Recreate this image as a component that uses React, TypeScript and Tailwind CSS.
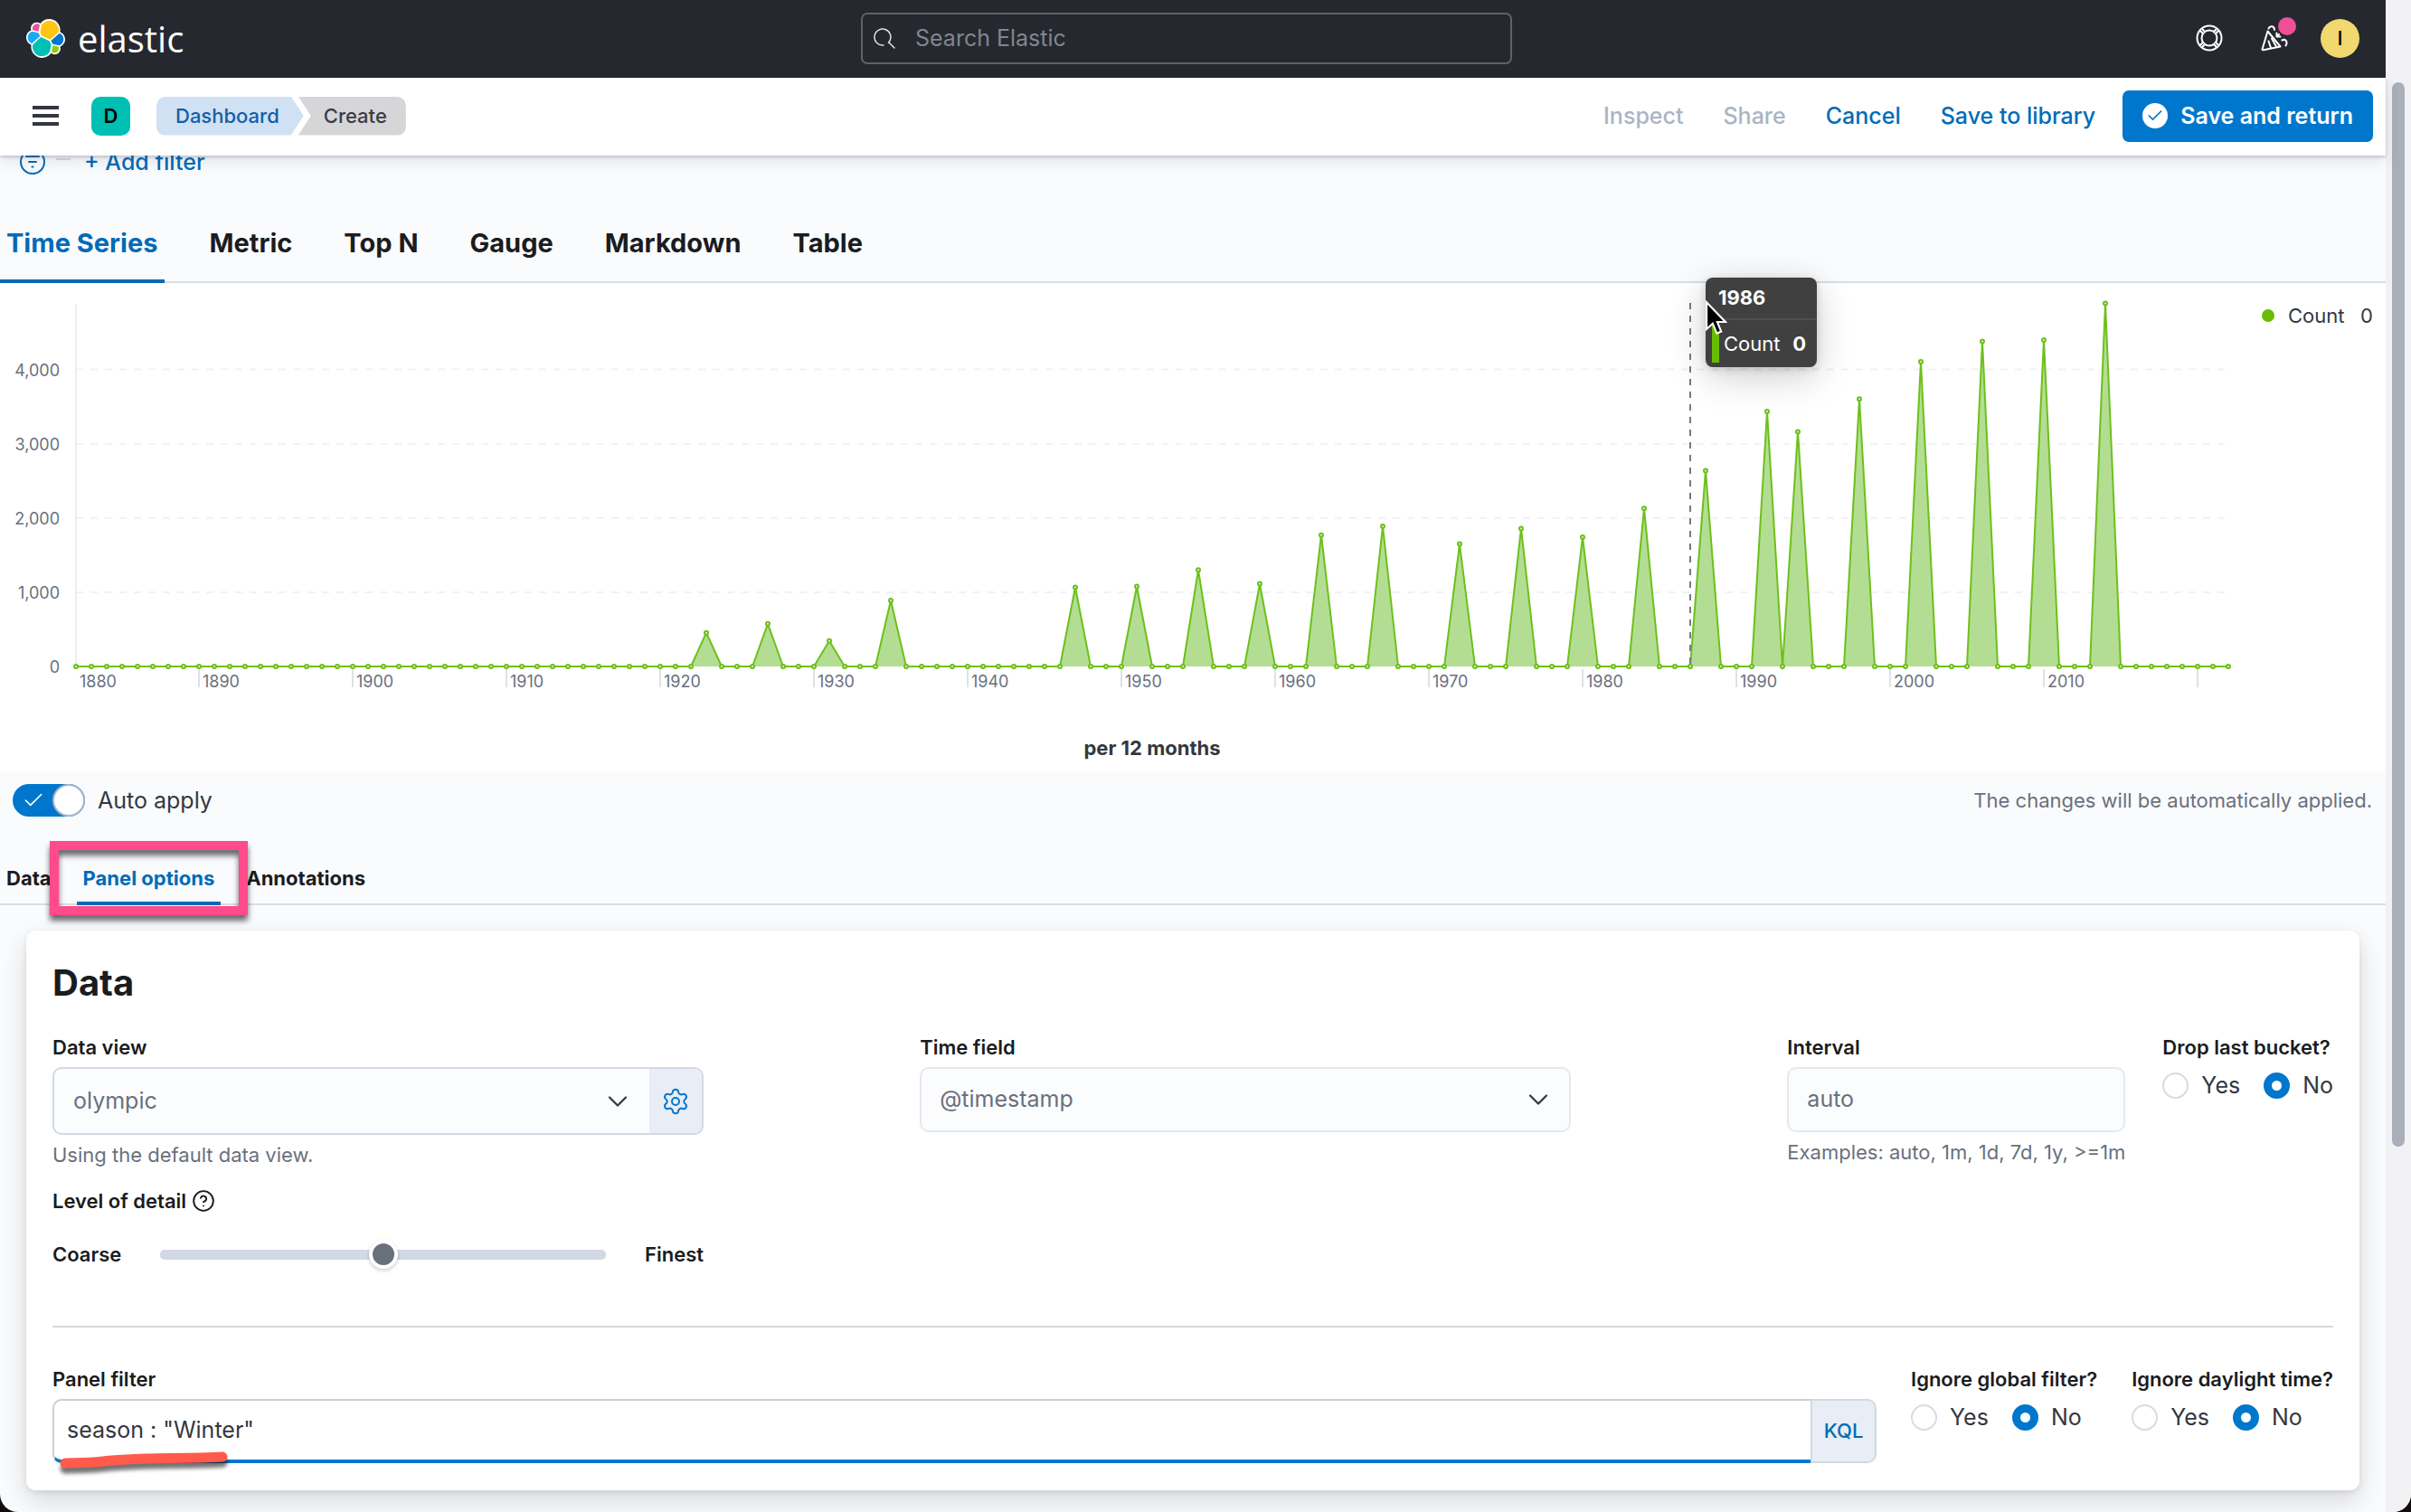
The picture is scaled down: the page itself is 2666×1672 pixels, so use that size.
import { useLayoutEffect, useRef, useState } from "react";
import type { ReactNode } from "react";
import { Check, ChevronDown, CircleQuestionMark, Settings } from "lucide-react";

const POINTS = 141;
const HOVERED = 105;

// bucket index -> document count, every other bucket is empty
const COUNTS: Record<number, number> = {
  41: 455, 45: 575, 49: 345, 53: 890, 65: 1066, 69: 1078, 73: 1300, 77: 1113,
  81: 1770, 85: 1888, 90: 1649, 94: 1858, 98: 1741, 102: 2127, 106: 2636, 110: 3434,
  112: 3160, 116: 3602, 120: 4104, 124: 4378, 128: 4398, 132: 4889,
};

const TICKS = [
  { index: 0, label: "1880" },
  { index: 8, label: "1890" },
  { index: 18, label: "1900" },
  { index: 28, label: "1910" },
  { index: 38, label: "1920" },
  { index: 48, label: "1930" },
  { index: 58, label: "1940" },
  { index: 68, label: "1950" },
  { index: 78, label: "1960" },
  { index: 88, label: "1970" },
  { index: 98, label: "1980" },
  { index: 108, label: "1990" },
  { index: 118, label: "2000" },
  { index: 128, label: "2010" },
  { index: 138, label: "" },
];

const VIS_TABS = ["Time Series", "Metric", "Top N", "Gauge", "Markdown", "Table"];

function ElasticLogo() {
  return (
    <svg viewBox="0 0 32 32" className="size-[43px]" aria-hidden="true">
      <path fill="#fff" d="M32 16.77c0-2.68-1.664-5.026-4.17-5.948.11-.57.165-1.15.165-1.744C27.995 4.07 23.93 0 18.932 0c-2.927 0-5.64 1.4-7.35 3.775a4.801 4.801 0 00-2.95-1.008c-2.66 0-4.825 2.167-4.825 4.83 0 .585.103 1.148.295 1.67C1.64 10.153 0 12.545 0 15.195c0 2.69 1.67 5.043 4.184 5.965-.11.56-.165 1.147-.165 1.744 0 4.994 4.06 9.058 9.05 9.058 2.93 0 5.636-1.408 7.34-3.79.845.66 1.88 1.025 2.95 1.025 2.66 0 4.825-2.167 4.825-4.83 0-.586-.103-1.149-.295-1.67C30.36 21.81 32 19.42 32 16.77" />
      <path fill="#fec514" d="M12.58 13.787l7.002 3.211 7.066-6.213a7.849 7.849 0 00.152-1.557c0-4.287-3.473-7.776-7.743-7.776a7.74 7.74 0 00-6.392 3.375l-1.176 6.12 1.09 2.84z" />
      <path fill="#00bfb3" d="M5.333 21.214a7.97 7.97 0 00-.153 1.58c0 4.3 3.49 7.797 7.778 7.797 2.586 0 4.996-1.28 6.447-3.43l1.166-6.1-1.557-2.99-7.03-3.216-6.65 6.358z" />
      <path fill="#f04e98" d="M5.29 9.085l4.8 1.137 1.05-5.476a3.8 3.8 0 00-6.085 3.037c0 .453.08.887.236 1.302z" />
      <path fill="#1ba9f5" d="M4.872 10.233c-2.143.712-3.6 2.774-3.6 5.04 0 2.207 1.361 4.178 3.404 4.96l6.734-6.115-1.236-2.654-5.302-1.23z" />
      <path fill="#93c90e" d="M20.873 27.16a3.79 3.79 0 002.305.785 3.803 3.803 0 003.558-5.107l-4.796-1.127-1.067 5.45z" />
      <path fill="#0077cc" d="M21.848 20.563l5.28 1.238c2.145-.711 3.6-2.773 3.6-5.04 0-2.205-1.364-4.173-3.41-4.953l-6.906 6.077 1.436 2.678z" />
    </svg>
  );
}

function TopHeader() {
  return (
    <header className="flex h-[86px] items-center bg-[#25282f] px-[29px] pb-[2px]">
      <a href="#home" className="flex flex-1 items-center gap-[14px]">
        <ElasticLogo />
        <span className="font-['Open_Sans',sans-serif] text-[40px] leading-[43px] text-white">elastic</span>
      </a>
      <label className="flex h-[57px] w-[720px] items-center gap-[22px] rounded-[7px] border-2 border-[#5f6267] px-3">
        <svg viewBox="0 0 24 24" className="size-6 shrink-0" fill="none" stroke="#dfe1e5" strokeWidth="1.500" strokeLinecap="round" aria-hidden="true">
          <path d="M16.5 17.2A9 9 0 1 0 11 20" />
          <path d="M17 17l6 6" />
        </svg>
        <input
          type="search"
          aria-label="Search Elastic"
          placeholder="Search Elastic"
          className="min-w-0 flex-1 bg-transparent text-[25px] leading-8 text-white outline-none placeholder:text-[#81858f]"
        />
      </label>
      <div className="flex flex-1 items-center justify-end pl-[14px]">
        <button type="button" aria-label="Help" className="mr-[42px]">
          <svg viewBox="0 0 30 30" className="size-[30px]" fill="none" stroke="#fff" strokeWidth="2" aria-hidden="true">
            <circle cx="15" cy="15" r="13.5" />
            <circle cx="15" cy="15" r="8.5" />
            <path strokeWidth="5" d="M5.5 5.5L9 9M24.5 5.5L21 9M5.5 24.5L9 21M24.5 24.5L21 21" />
            <path stroke="#25282f" strokeWidth="1" d="M5.8 5.8L8.8 8.8M24.2 5.8L21.2 8.8M5.8 24.2L8.8 21.2M24.2 24.2L21.2 21.2" />
          </svg>
        </button>
        <button type="button" aria-label="Newsfeed" className="relative mr-9">
          <svg viewBox="0 0 30 30" className="size-[30px]" fill="none" stroke="#fff" strokeWidth="2" strokeLinecap="round" strokeLinejoin="round" aria-hidden="true">
            <path d="M7.500 7.500L1.500 27.500Q1.500 28.500 3 28.300L21.500 24.500Z" />
            <path d="M8.500 18.500L11 26M12 15.500L17 24.500" />
            <path d="M8.500 4.500C10 1 15 1.500 15 6M23.500 17.500C27.500 15.500 30 19.500 27.500 23.500" />
            <path d="M17.500 9.500V13.500H21.500M17.500 13.500L20 11" />
          </svg>
          <span className="absolute -top-[8px] -right-[9px] size-5 rounded-full bg-[#f04e98]" />
        </button>
        <button type="button" aria-label="Account menu" className="flex size-[43px] items-center justify-center rounded-full bg-[#f1d86f] text-[22px] font-medium text-black">
          I
        </button>
      </div>
    </header>
  );
}

function ActionBar() {
  return (
    <div className="relative z-10 flex h-[86px] items-center bg-white pr-[14px] pb-[2px] pl-9 shadow-[0_2px_3px_rgba(60,60,80,0.22),0_6px_16px_rgba(60,60,80,0.12)]">
      <button type="button" aria-label="Toggle navigation" className="flex w-[29px] flex-col gap-[5px]">
        <span className="h-1 bg-[#343741]" />
        <span className="h-1 bg-[#343741]" />
        <span className="h-1 bg-[#343741]" />
      </button>
      <button type="button" className="ml-9 flex size-[43px] items-center justify-center rounded-[10px] bg-[#00bfb3] text-[22px] font-semibold text-black">
        D
      </button>
      <nav aria-label="Breadcrumb" className="ml-[29px] flex text-[22px] leading-[43px] font-medium">
        <a href="#dashboard" className="rounded-l-[10px] bg-[#d0e1f4] pr-[27px] pl-[21px] text-[#1260a8] [clip-path:polygon(0_0,calc(100%_-_14px)_0,100%_50%,calc(100%_-_14px)_100%,0_100%)]">
          Dashboard
        </a>
        <span aria-current="page" className="-ml-[6px] rounded-r-[10px] bg-[#d6d6d8] pr-[21px] pl-[28px] text-[#3a3c44] [clip-path:polygon(0_0,100%_0,100%_100%,0_100%,14px_50%)]">
          Create
        </span>
      </nav>
      <div className="ml-auto flex items-center gap-11 text-[25px] leading-8 font-medium text-[#006bb8]">
        <button type="button" disabled className="text-[#abb4c4]">Inspect</button>
        <button type="button" disabled className="text-[#abb4c4]">Share</button>
        <button type="button">Cancel</button>
        <button type="button">Save to library</button>
      </div>
      <button type="button" className="ml-[30px] flex h-[57px] items-center gap-[14px] rounded-[7px] bg-[#0077cc] px-[22px] text-[25px] leading-8 font-semibold text-white">
        <span className="flex size-[28px] items-center justify-center rounded-full bg-white">
          <Check size={20} strokeWidth={2} className="text-[#0077cc]" />
        </span>
        Save and return
      </button>
    </div>
  );
}

function FilterRow() {
  return (
    <div className="-mt-[15px] mb-[23px] flex h-[43px] items-center pl-[22px]">
      <button type="button" aria-label="Filter options">
        <svg viewBox="0 0 28 28" className="size-7" fill="none" stroke="#006bb8" strokeWidth="2" strokeLinecap="round" aria-hidden="true">
          <circle cx="14" cy="14" r="13" />
          <path d="M7 8h14M10 14h8M13.500 19.500h1" />
        </svg>
      </button>
      <span className="mr-[15px] mb-[6px] ml-3 h-[2px] w-4 bg-[#d3dae6]" />
      <button type="button" className="text-[25px] leading-8 font-medium text-[#006bb8]">+ Add filter</button>
    </div>
  );
}

function Chart() {
  const ref = useRef<HTMLDivElement>(null);
  const [width, setWidth] = useState(2480);

  useLayoutEffect(() => {
    const el = ref.current;
    if (!el) return;
    const update = () => setWidth(el.clientWidth);
    update();
    const observer = new ResizeObserver(update);
    observer.observe(el);
    return () => observer.disconnect();
  }, []);

  const left = 84;
  const right = width - 16;
  const base = 424;
  const x = (i: number) => left + (i * (right - left)) / (POINTS - 1);
  const y = (v: number) => base - (v * 82.1) / 1000;
  const points = Array.from({ length: POINTS }, (_, i) => ({ x: x(i), y: y(COUNTS[i] ?? 0) }));
  const line = points.map((p) => `${p.x},${p.y}`).join(" ");

  return (
    <section className="flex h-[540px] bg-white">
      <div ref={ref} className="relative min-w-0 flex-1">
        <svg width={width} height="540" className="block" role="img" aria-label="Count per 12 months">
          {[1000, 2000, 3000, 4000].map((v) => (
            <line key={v} x1={left} x2={right} y1={y(v)} y2={y(v)} stroke="#f0f1f4" strokeWidth="2" strokeDasharray="8 8" />
          ))}
          <line x1={left} x2={left} y1="23" y2={base} stroke="#eaedf2" strokeWidth="2" />
          <polygon points={`${left},${base} ${line} ${right},${base}`} fill="#b4dd94" />
          <polyline points={line} fill="none" stroke="#6dc01a" strokeWidth="2" strokeLinejoin="bevel" />
          {points.map((p, i) => (
            <circle key={i} cx={p.x} cy={p.y} r="2" fill="#e6f5da" stroke="#6dc01a" strokeWidth="2" />
          ))}
          {[0, 1000, 2000, 3000, 4000].map((v) => (
            <text key={v} x="66" y={y(v) + 7} textAnchor="end" fontSize="18" fill="#69707d">
              {v.toLocaleString("en-US")}
            </text>
          ))}
          {TICKS.map((t) => (
            <g key={t.index}>
              {t.index > 0 && <line x1={x(t.index)} x2={x(t.index)} y1="427" y2="447" stroke="#dfe2e8" strokeWidth="2" />}
              <text x={x(t.index) + 4} y="447" fontSize="18" fill="#69707d">{t.label}</text>
            </g>
          ))}
          <line x1={x(HOVERED)} x2={x(HOVERED)} y1="22" y2={base} stroke="#777a80" strokeWidth="2" strokeDasharray="7 7" />
          <text x={(left + right) / 2} y="522" textAnchor="middle" fontSize="22" fontWeight="700" fill="#343741">
            per 12 months
          </text>
        </svg>
        <div className="absolute -top-[6px] z-20 w-[123px] rounded-[8px] bg-[#404040] text-[22px] leading-[30px] text-white shadow-[0_10px_40px_rgba(0,0,0,0.2),0_2px_10px_rgba(0,0,0,0.15)]" style={{ left: x(HOVERED) + 17 }}>
          <div className="border-b-2 border-[#4f4f4f] px-[14px] pt-[7px] pb-[8px] font-bold">1986</div>
          <div className="flex items-center py-[5px] pr-[12px] pl-[7px]">
            <span className="mr-[5px] h-[42px] w-2 bg-[#68bc00]" />
            Count
            <span className="ml-auto font-bold">0</span>
          </div>
          <svg viewBox="0 0 24 38" className="absolute top-[25px] -left-[1px] h-[40px] w-[25px]" aria-hidden="true">
            <path d="M2 2V30.500L8.500 24.500L12.800 35L17.500 33L13.300 22.800H22Z" fill="#000" stroke="#fff" strokeWidth="2" />
          </svg>
        </div>
      </div>
      <div className="flex w-[158px] items-start pt-[22px] pr-[14px] pl-[21px] text-[22px] leading-7 text-[#343741]">
        <button type="button" className="flex flex-1 items-center gap-[15px]">
          <span className="size-[14px] rounded-full bg-[#68bc00]" />
          <span>Count</span>
          <span className="ml-auto">0</span>
        </button>
      </div>
    </section>
  );
}

function Field({ label, id, help, children }: { label: string; id: string; help?: string; children: ReactNode }) {
  return (
    <div>
      <label htmlFor={id} className="mb-[7px] block text-[22px] leading-[30px] font-semibold text-[#1a1c21]">{label}</label>
      {children}
      {help && <p className="mt-[7px] text-[22px] leading-[30px] text-[#69707d]">{help}</p>}
    </div>
  );
}

function YesNo({ legend, name }: { legend: string; name: string }) {
  return (
    <fieldset className="shrink-0">
      <legend className="mb-[13px] text-[22px] leading-[30px] font-semibold text-[#1a1c21]">{legend}</legend>
      <div className="flex gap-[26px] text-[25px] leading-[29px] text-[#343741]">
        {["Yes", "No"].map((option) => (
          <label key={option} className="flex items-center gap-[14px]">
            <input
              type="radio"
              name={name}
              defaultChecked={option === "No"}
              className="size-[29px] appearance-none rounded-full border-2 border-[#d8dbe2] bg-white checked:border-9 checked:border-[#0077cc]"
            />
            {option}
          </label>
        ))}
      </div>
    </fieldset>
  );
}

function DataPanel() {
  return (
    <section className="mx-[29px] mt-7 rounded-[10px] bg-white p-[29px] pb-[30px] shadow-[0_2px_6px_rgba(0,0,0,0.08),0_12px_28px_rgba(0,0,0,0.14)]">
      <h2 className="mb-7 text-[40px] leading-[57px] font-bold text-[#1a1c21]">Data</h2>
      <div className="flex gap-[41px]">
        <div className="min-w-0 flex-1">
          <div className="max-w-[720px]">
            <Field label="Data view" id="data-view" help="Using the default data view.">
              <div className="flex h-[75px] overflow-hidden rounded-[10px] border-2 border-[#d3d8e5] bg-[#fbfcfd]">
                <div className="relative flex-1">
                  <select id="data-view" className="h-full w-full appearance-none pl-[21px] text-[25px] text-[#69707d]">
                    <option>olympic</option>
                  </select>
                  <ChevronDown size={36} strokeWidth={1.5} className="pointer-events-none absolute top-[18px] right-[17px] text-[#343741]" />
                </div>
                <button type="button" aria-label="Data view settings" className="flex w-[58px] items-center justify-center bg-[#e9edf5]">
                  <Settings size={32} strokeWidth={1.5} className="text-[#0077cc]" />
                </button>
              </div>
            </Field>
            <div className="mt-[21px] flex items-center gap-[6px] text-[22px] leading-[30px] font-semibold text-[#1a1c21]">
              <label htmlFor="detail">Level of detail</label>
              <CircleQuestionMark size={26} strokeWidth={1.75} />
            </div>
            <div className="mt-[29px] flex items-center gap-[43px] text-[22px] leading-[30px] font-semibold text-[#1a1c21]">
              <span>Coarse</span>
              <input
                id="detail"
                type="range"
                defaultValue={50}
                className="h-[11px] min-w-0 flex-1 appearance-none rounded-[5px] bg-[#d3d8e5] [&::-webkit-slider-thumb]:size-8 [&::-webkit-slider-thumb]:appearance-none [&::-webkit-slider-thumb]:rounded-full [&::-webkit-slider-thumb]:border-4 [&::-webkit-slider-thumb]:border-white [&::-webkit-slider-thumb]:bg-[#69707d] [&::-webkit-slider-thumb]:shadow-[0_2px_4px_rgba(0,0,0,0.2)]"
              />
              <span>Finest</span>
            </div>
          </div>
        </div>
        <div className="min-w-0 flex-1">
          <div className="max-w-[720px]">
            <Field label="Time field" id="time-field">
              <div className="relative h-[72px] rounded-[10px] border-2 border-[#e4e8f0] bg-[#fbfcfd]">
                <select id="time-field" className="h-full w-full appearance-none pl-5 text-[25px] text-[#69707d]">
                  <option>@timestamp</option>
                </select>
                <ChevronDown size={36} strokeWidth={1.5} className="pointer-events-none absolute top-4 right-[16px] text-[#343741]" />
              </div>
            </Field>
          </div>
        </div>
        <div className="shrink-0">
          <Field label="Interval" id="interval" help="Examples: auto, 1m, 1d, 7d, 1y, >=1m">
            <div className="flex h-[72px] rounded-[10px] border-2 border-[#e4e8f0] bg-[#fbfcfd]">
              <input id="interval" type="text" placeholder="auto" className="w-0 flex-1 px-5 text-[25px] outline-none placeholder:text-[#69707d]" />
            </div>
          </Field>
        </div>
        <YesNo legend="Drop last bucket?" name="drop-last" />
      </div>
      <hr className="mt-16 mb-[42px] border-t-2 border-[#d5d8de]" />
      <div className="flex gap-[38px]">
        <div className="relative min-w-0 flex-1">
          <Field label="Panel filter" id="panel-filter">
            <div className="flex h-[71px]">
              <input
                id="panel-filter"
                type="text"
                defaultValue={'season : "Winter"'}
                className="min-w-0 flex-1 rounded-l-[10px] border-2 border-r-0 border-b-4 border-[#c9cfd8] border-b-[#0077cc] pl-[14px] text-[25px] text-[#343741] outline-none"
              />
              <button type="button" className="w-[73px] rounded-r-[10px] border-2 border-[#d3d8e5] bg-[#e9edf5] text-[22px] font-medium text-[#006bb8]">
                KQL
              </button>
            </div>
          </Field>
          <svg viewBox="0 0 194 24" className="absolute -bottom-[10px] left-[6px] h-6 w-[194px] drop-shadow-[0_6px_2px_rgba(0,0,0,0.55)]" aria-hidden="true">
            <path d="M8 14C30 13 34 14 50 12S80 10 95 9S150 9 182 7" fill="none" stroke="#ff5a4b" strokeWidth="11" strokeLinecap="round" />
          </svg>
        </div>
        <YesNo legend="Ignore global filter?" name="ignore-global" />
        <YesNo legend="Ignore daylight time?" name="ignore-daylight" />
      </div>
    </section>
  );
}

export default function App() {
  return (
    <div className="min-h-screen bg-[#120c0c] font-[Inter,sans-serif]">
      <div className="flex min-h-screen overflow-hidden rounded-b-[20px] bg-[#fafbfd]">
        <div className="min-w-0 flex-1 pb-6">
          <TopHeader />
          <ActionBar />
          <main>
            <FilterRow />
            <nav className="flex gap-[43px] border-b-2 border-[#d8dce4] text-[29px] leading-[80px] font-bold text-[#1a1c21]">
              {VIS_TABS.map((tab, i) => (
                <button
                  key={tab}
                  type="button"
                  className={i === 0 ? "-mb-[2px] border-b-4 border-[#006bb8] px-[7px] pt-[6px] text-[#006bb8]" : "px-[7px] pt-[6px] pb-[2px]"}
                >
                  {tab}
                </button>
              ))}
            </nav>
            <Chart />
            <div className="flex h-16 items-center justify-between pr-[15px] pl-[14px]">
              <label className="flex items-center gap-[14px] text-[25px] leading-8 text-[#343741]">
                <input type="checkbox" role="switch" defaultChecked className="peer sr-only" />
                <span className="flex h-9 w-20 items-center justify-between rounded-full bg-[#0077cc] pl-[10px]">
                  <Check size={26} strokeWidth={1.5} className="text-white" />
                  <span className="size-9 rounded-full border-2 border-[#aab8cc] bg-white" />
                </span>
                Auto apply
              </label>
              <p className="text-[22px] leading-[30px] text-[#69707d]">The changes will be automatically applied.</p>
            </div>
            <nav className="mt-6 flex gap-[21px] border-b-2 border-[#d8dce4] text-[22px] leading-[52px] font-bold text-[#1a1c21]">
              <button type="button" className="px-[7px] pt-1 pb-[2px]">Data</button>
              <button type="button" className="relative -mb-[2px] border-b-4 border-[#006bb8] px-[7px] pt-1 text-[#006bb8]">
                Panel options
                <span className="absolute -inset-x-[30px] -top-[11px] -bottom-[15px] z-10 border-10 border-[#ff4a8b] drop-shadow-[0_6px_3px_rgba(0,0,0,0.6)]" />
              </button>
              <button type="button" className="px-[7px] pt-1 pb-[2px]">Annotations</button>
            </nav>
            <DataPanel />
          </main>
        </div>
        {/* scrollbar */}
        <div className="flex w-7 flex-col bg-[#f2f2f4] px-[7px] pt-[91px]">
          <div className="flex-[35] rounded-full bg-[#a9aeb8]" />
          <div className="flex-[12]" />
        </div>
      </div>
    </div>
  );
}
